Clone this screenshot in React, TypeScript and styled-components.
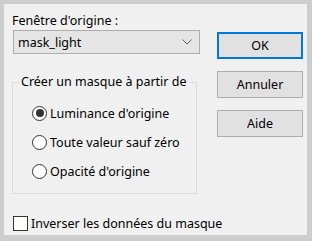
import React from 'react';
import styled, {createGlobalStyle} from 'styled-components';

const GlobalStyle = createGlobalStyle`
    html, body {
        margin: 0;
        padding: 0;
        background: #cdcdcd;
    }
    body {
        font-family: "Noto Sans", "Open Sans", sans-serif;
        font-size: 12.5px;
        color: #000;
    }
`;

const Frame = styled.div`
    width: 312px;
    height: 241px;
    padding: 4px 5px 6px 4px;
    box-sizing: border-box;
`;

const Panel = styled.div`
    width: 100%;
    height: 100%;
    background: #f0f0f0;
    display: flex;
    flex-direction: column;
    padding: 7px 4px 0 8px;
    box-sizing: border-box;
`;

const Top = styled.div`
    display: flex;
    gap: 17px;
`;

const LeftCol = styled.div`
    width: 188px;
    display: flex;
    flex-direction: column;
`;

const Label = styled.div`
    height: 19px;
    line-height: 19px;
`;

const Combo = styled.div`
    margin-left: 1px;
    height: 24px;
    border: 1px solid #adadad;
    background: #e5e5e5;
    display: flex;
    align-items: center;
    justify-content: space-between;
    padding: 0 7px 0 4px;
    box-sizing: border-box;
`;

const Group = styled.fieldset`
    margin: 19px 3px 0 0;
    padding: 12px 0 0 6px;
    border: 1px solid #dcdcdc;
    display: flex;
    flex-direction: column;
    gap: 9px;
    height: 121px;
    box-sizing: border-box;
    min-width: 0;
`;

const Legend = styled.legend`
    padding: 0 2px;
    line-height: 18px;
    white-space: nowrap;
`;

const RadioRow = styled.label`
    display: flex;
    align-items: center;
    gap: 3px;
    height: 20px;
    padding-left: 13px;
`;

const RadioCircle = styled.span<{ $checked?: boolean }>`
    width: 15px;
    height: 15px;
    border-radius: 50%;
    border: 1px solid #333;
    background: #fff;
    box-sizing: border-box;
    display: flex;
    align-items: center;
    justify-content: center;

    &::after {
        content: '';
        width: 8px;
        height: 8px;
        border-radius: 50%;
        background: ${p => (p.$checked ? '#333' : 'transparent')};
    }
`;

const ButtonCol = styled.div`
    width: 86px;
    display: flex;
    flex-direction: column;
    gap: 12px;
    padding-top: 21px;
`;

const Button = styled.div<{ $default?: boolean }>`
    height: 27px;
    box-sizing: border-box;
    border: ${p => (p.$default ? '2px solid #0078d7' : '1px solid #adadad')};
    background: #e1e1e1;
    display: flex;
    align-items: center;
    justify-content: center;
`;

const CheckRow = styled.label`
    display: flex;
    align-items: center;
    gap: 3px;
    margin-top: 21px;
    margin-left: 1px;
    white-space: nowrap;
`;

const CheckBox = styled.span`
    width: 15px;
    height: 15px;
    border: 1px solid #333;
    background: #fff;
    box-sizing: border-box;
`;

const Chevron = () => (
    <svg width="10" height="6" viewBox="0 0 10 6">
        <path d="M0.5 0.5 L5 5 L9.5 0.5" fill="none" stroke="#606060" strokeWidth="1"/>
    </svg>
);

const App: React.FC = () => (
    <>
        <GlobalStyle/>
        <Frame>
            <Panel>
                <Top>
                    <LeftCol>
                        <Label>Fenêtre d'origine :</Label>
                        <Combo>
                            <span>mask_light</span>
                            <Chevron/>
                        </Combo>
                        <Group>
                            <Legend>Créer un masque à partir de</Legend>
                            <RadioRow><RadioCircle $checked/>Luminance d'origine</RadioRow>
                            <RadioRow><RadioCircle/>Toute valeur sauf zéro</RadioRow>
                            <RadioRow><RadioCircle/>Opacité d'origine</RadioRow>
                        </Group>
                    </LeftCol>
                    <ButtonCol>
                        <Button $default>OK</Button>
                        <Button>Annuler</Button>
                        <Button>Aide</Button>
                    </ButtonCol>
                </Top>
                <CheckRow><CheckBox/>Inverser les données du masque</CheckRow>
            </Panel>
        </Frame>
    </>
);

export default App;
